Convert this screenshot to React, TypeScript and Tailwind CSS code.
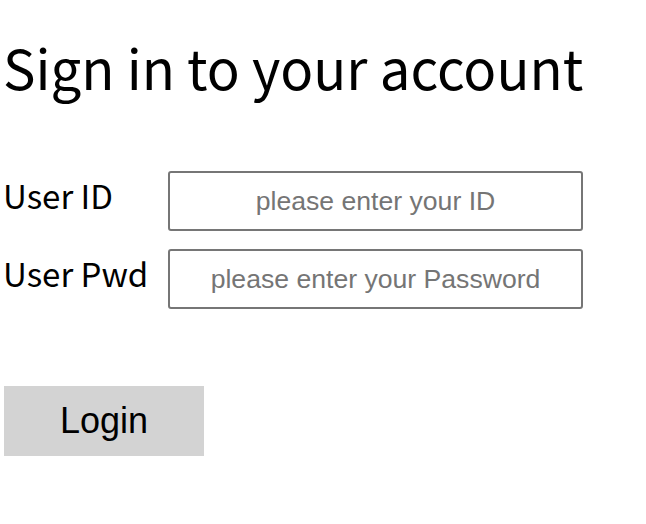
const App = () => {
  return (
    <div className="bg-white min-h-screen px-[5px] pt-[31px] font-['Noto_Sans_CJK_KR',sans-serif] text-black">
      <h1 className="-ml-[2px] text-[54.5px] leading-[72px] whitespace-nowrap">Sign in to your account</h1>
      <form
        className="mt-[68px]"
        onSubmit={(e) => e.preventDefault()}
      >
        <div className="grid grid-cols-[163px_415px] gap-y-[18px] items-center">
          <label htmlFor="uid" className="-ml-[2px] text-[33px] leading-[40px] -mt-[12px]">
            User ID
          </label>
          <input
            id="uid"
            type="text"
            placeholder="please enter your ID"
            className="h-[60px] border-2 border-[#767676] rounded-[3px] text-center text-[26.6px] font-['Liberation_Sans',Arial,sans-serif] placeholder:text-[#757575] outline-none"
          />
          <label htmlFor="upw" className="-ml-[2px] text-[33px] leading-[40px] -mt-[12px]">
            User Pwd
          </label>
          <input
            id="upw"
            type="password"
            placeholder="please enter your Password"
            className="h-[60px] border-2 border-[#767676] rounded-[3px] text-center text-[26.6px] font-['Liberation_Sans',Arial,sans-serif] placeholder:text-[#757575] outline-none"
          />
        </div>
        <button
          type="submit"
          className="mt-[77px] -ml-px w-[200px] h-[70px] bg-[#d3d3d3] text-[36px] font-['Liberation_Sans',Arial,sans-serif]"
        >
          Login
        </button>
      </form>
    </div>
  );
};

export default App;
